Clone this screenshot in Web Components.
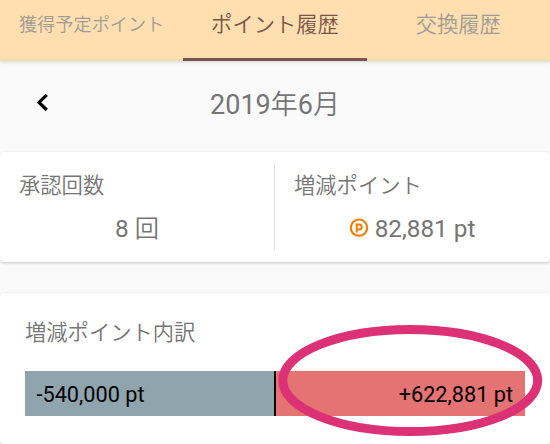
<!DOCTYPE html>
<html lang="ja">
<head>
<meta charset="utf-8">
<title>ポイント履歴</title>
<style>
html, body {
	margin: 0;
	height: 100%;
	overflow: hidden;
	background: #fafafa;
}
body {
	font-family: Roboto, "Noto Sans CJK JP DemiLight", "Noto Sans CJK JP", sans-serif;
	font-weight: 400;
	color: #757575;
}
</style>
</head>
<body>
<point-history>
	<tab-bar slot="tabs">
		<tab-item style="--tab-size: 18.2px">獲得予定ポイント</tab-item>
		<tab-item active>ポイント履歴</tab-item>
		<tab-item>交換履歴</tab-item>
	</tab-bar>
	<month-picker>2019年6月</month-picker>
	<info-card class="summary">
		<summary-item label="承認回数">8 回</summary-item>
		<summary-item label="増減ポイント"><point-icon slot="icon"></point-icon>82,881 pt</summary-item>
	</info-card>
	<info-card class="breakdown">
		<balance-bar label="増減ポイント内訳">
			<span slot="minus">-540,000 pt</span>
			<span slot="plus">+622,881 pt</span>
		</balance-bar>
	</info-card>
</point-history>

<script>
class BaseElement extends HTMLElement {
	connectedCallback() {
		if (!this.shadowRoot) {
			this.attachShadow({ mode: 'open' }).innerHTML = this.template();
		}
	}
}

class PointHistory extends BaseElement {
	template() {
		return `
<style>
:host {
	display: flex;
	flex-direction: column;
	height: 100vh;
}
::slotted(.summary) {
	flex: none;
	height: 110px;
	margin-bottom: 31px;
}
::slotted(.breakdown) {
	flex: 1;
}
</style>
<slot name="tabs"></slot>
<slot></slot>
`;
	}
}

class TabBar extends BaseElement {
	template() {
		return `
<style>
:host {
	display: flex;
	flex: none;
	height: 61px;
	background: #ffdfb0;
	box-shadow: 0 1px 3px rgba(0,0,0,0.16);
}
</style>
<slot></slot>
`;
	}
}

class TabItem extends BaseElement {
	template() {
		return `
<style>
:host {
	display: flex;
	flex: 1;
	align-items: center;
	justify-content: center;
	box-sizing: border-box;
	padding-top: 1px;
	padding-bottom: 10px;
	border-bottom: 3px solid transparent;
	font-size: var(--tab-size, 21.3px);
	line-height: 30px;
	white-space: nowrap;
	color: #9e9b94;
}
:host([active]) {
	border-bottom-color: #795548;
	color: #795548;
}
</style>
<slot></slot>
`;
	}
}

class MonthPicker extends BaseElement {
	template() {
		return `
<style>
:host {
	display: grid;
	grid-template-columns: 60px 1fr 60px;
	flex: none;
	align-items: center;
	box-sizing: border-box;
	height: 91px;
	padding-bottom: 7px;
	font-size: 27px;
	line-height: 38px;
	text-align: center;
}
svg {
	display: block;
	margin-left: 34px;
}
div {
	padding-top: 3px;
}
</style>
<svg width="16" height="22" viewBox="0 0 16 22"><path d="M12.8 2.8 L5 10.4 L12.8 18" fill="none" stroke="#000" stroke-width="3.2"/></svg>
<div><slot></slot></div>
`;
	}
}

class InfoCard extends BaseElement {
	template() {
		return `
<style>
:host {
	display: flex;
	box-sizing: border-box;
	padding: 12px 0;
	border-radius: 4px;
	background: #fff;
	box-shadow: 0 1px 3px rgba(0,0,0,0.22);
}
</style>
<slot></slot>
`;
	}
}

class SummaryItem extends BaseElement {
	template() {
		return `
<style>
:host {
	flex: 1;
	box-sizing: border-box;
}
:host(:not(:last-child)) {
	flex: 0 0 275px;
	border-right: 1px solid #e0e0e0;
}
.label {
	padding: 7px 0 0 19px;
	font-size: 21.3px;
	line-height: 30px;
}
.value {
	display: flex;
	align-items: center;
	justify-content: center;
	margin-top: 11px;
	font-size: 24.3px;
	line-height: 34px;
}
</style>
<div class="label">${this.getAttribute('label')}</div>
<div class="value"><slot name="icon"></slot><span><slot></slot></span></div>
`;
	}
}

// orange coin with a P
class PointIcon extends BaseElement {
	template() {
		return `
<style>
:host {
	display: block;
	width: 20px;
	height: 20px;
	margin: 0 5px 2px 0;
}
svg {
	display: block;
}
</style>
<svg width="20" height="20" viewBox="0 0 20 20" fill="none" stroke="#f57c00">
	<circle cx="9" cy="9.7" r="8.2" stroke-width="2.1"/>
	<path d="M6.7 14.4 V6.5 H9.2 A2.5 2.5 0 0 1 9.2 11.5 H6.7" stroke-width="2"/>
</svg>
`;
	}
}

class BalanceBar extends BaseElement {
	template() {
		return `
<style>
:host {
	display: block;
	position: relative;
	flex: 1;
	padding: 13px 25px 0;
}
.label {
	font-size: 21.3px;
	line-height: 30px;
}
.bar {
	display: flex;
	height: 45px;
	margin: 23px 0 0 -0.5px;
	font-size: 21.7px;
	line-height: 47px;
	color: #000;
}
.minus, .plus {
	flex: 1;
	box-sizing: border-box;
	padding: 0 12px;
}
.minus {
	background: #90a4ae;
}
.plus {
	background: #e57373;
	text-align: right;
}
.divider {
	flex: none;
	width: 2px;
	background: #000;
}
.marker {
	position: absolute;
	top: 17px;
	left: 275px;
}
</style>
<div class="label">${this.getAttribute('label')}</div>
<div class="bar">
	<div class="minus"><slot name="minus"></slot></div>
	<div class="divider"></div>
	<div class="plus"><slot name="plus"></slot></div>
</div>
<svg class="marker" width="270" height="120" viewBox="0 0 270 120"><ellipse cx="135.2" cy="58.5" rx="127.5" ry="51" fill="none" stroke="#dc3175" stroke-width="9"/></svg>
`;
	}
}

window.customElements.define('point-history', PointHistory);
window.customElements.define('tab-bar', TabBar);
window.customElements.define('tab-item', TabItem);
window.customElements.define('month-picker', MonthPicker);
window.customElements.define('info-card', InfoCard);
window.customElements.define('summary-item', SummaryItem);
window.customElements.define('point-icon', PointIcon);
window.customElements.define('balance-bar', BalanceBar);
</script>
</body>
</html>
